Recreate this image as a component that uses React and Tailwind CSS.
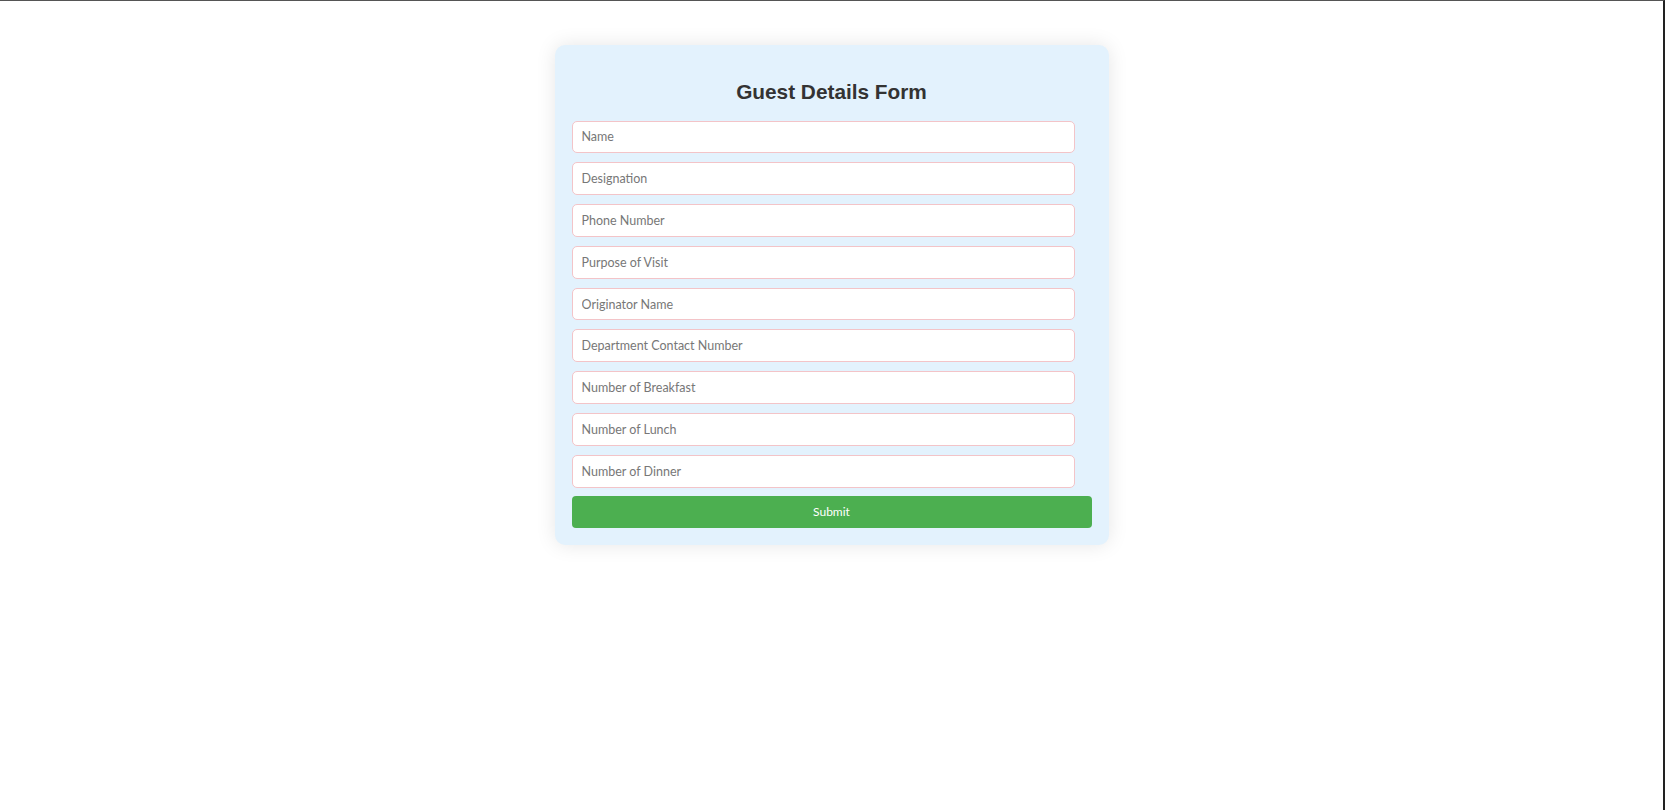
const fields = [
  "Name",
  "Designation",
  "Phone Number",
  "Purpose of Visit",
  "Originator Name",
  "Department Contact Number",
  "Number of Breakfast",
  "Number of Lunch",
  "Number of Dinner",
];

export default function App() {
  return (
    <div className="h-screen bg-white border-t border-t-[#555] border-r-2 border-r-[#222] font-['Lato',sans-serif]">
      <div className="mx-auto mt-[44px] w-[554px] rounded-[10px] bg-[#e3f2fd] px-[17px] pt-[17px] pb-[17.5px] shadow-[0_0_20px_rgba(0,0,0,0.1)]">
        <h2 className="mt-[17.6px] mb-[17px] text-center font-['Liberation_Sans',Arial,sans-serif] text-[20.8px] font-bold leading-[23.9px] text-[#333]">
          Guest Details Form
        </h2>
        <form className="flex flex-col" onSubmit={(e) => e.preventDefault()}>
          <div className="flex flex-col gap-[9px]">
            {fields.map((f) => (
              <input
                key={f}
                type="text"
                placeholder={f}
                className="h-[32.8px] w-[503px] rounded-[5px] border border-[#f3c4c8] bg-white px-[9px] text-[12.5px] text-[#333] outline-none placeholder:text-[#777]"
              />
            ))}
          </div>
          <button
            type="submit"
            className="mt-[8.8px] h-[31.4px] w-full rounded-[4px] bg-[#4caf50] text-[12px] text-white"
          >
            Submit
          </button>
        </form>
      </div>
    </div>
  );
}
